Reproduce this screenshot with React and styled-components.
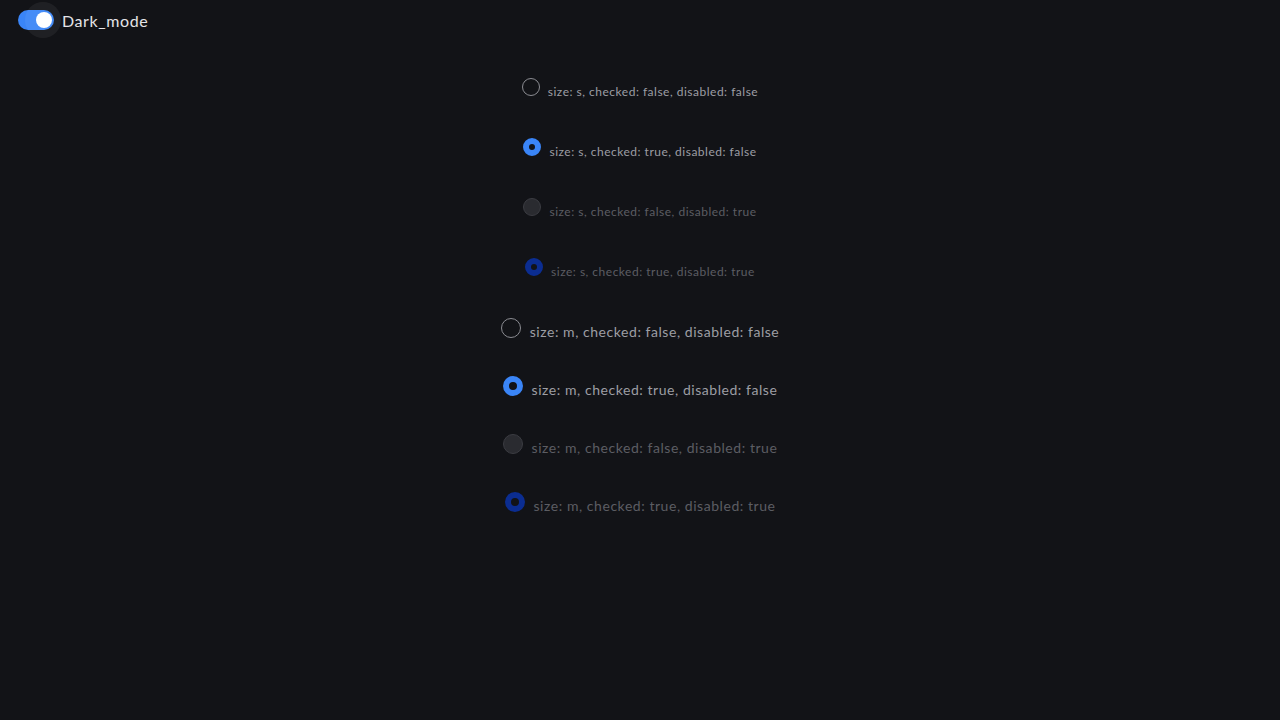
import React from 'react';
import styled, { createGlobalStyle } from 'styled-components';

const GlobalStyle = createGlobalStyle`
  html, body {
    margin: 0;
    padding: 0;
    background: #121317;
    font-family: Lato, "Noto Sans", sans-serif;
  }
  #root {
    min-height: 720px;
  }
`;

const Page = styled.div`
  min-height: 720px;
  background: #121317;
`;

const TopBar = styled.div`
  display: flex;
  align-items: center;
  gap: 8px;
  padding: 10px 0 0 18px;
  height: 20px;
`;

const Toggle = styled.div`
  position: relative;
  width: 36px;
  height: 20px;
  border-radius: 10px;
  background: #3a85f7;
`;

const Halo = styled.div`
  position: absolute;
  left: 7px;
  top: -8px;
  width: 36px;
  height: 36px;
  border-radius: 50%;
  background: rgba(255, 255, 255, 0.06);
`;

const Knob = styled.div`
  position: absolute;
  right: 2px;
  top: 2px;
  width: 16px;
  height: 16px;
  border-radius: 50%;
  background: #ffffff;
`;

const ToggleLabel = styled.span`
  color: #e4e4e7;
  font-size: 16px;
  letter-spacing: 0.6px;
`;

const List = styled.div`
  display: flex;
  flex-direction: column;
  padding-top: 48px;
`;

const Row = styled.div`
  display: flex;
  justify-content: center;
  align-items: flex-start;
  height: ${({ $size }) => ($size === 'm' ? 58 : 60)}px;
  gap: ${({ $size }) => ($size === 'm' ? 9 : 8)}px;
`;

const circleColors = ({ $checked, $disabled }) => {
  if ($checked && $disabled) return 'background: #121317; border-color: #0b2d91;';
  if ($checked) return 'background: #121317; border-color: #3a85f7;';
  if ($disabled) return 'background: #2a2b30; border-color: #3b3c42;';
  return 'background: transparent; border-color: #8b8c92;';
};

const Circle = styled.span`
  box-sizing: border-box;
  flex: none;
  width: ${({ $size }) => ($size === 'm' ? 20 : 18)}px;
  height: ${({ $size }) => ($size === 'm' ? 20 : 18)}px;
  border-radius: 50%;
  border-style: solid;
  border-width: ${({ $checked }) => ($checked ? 6 : 1)}px;
  ${circleColors}
`;

const Label = styled.span`
  font-size: ${({ $size }) => ($size === 'm' ? 14 : 12)}px;
  line-height: ${({ $size }) => ($size === 'm' ? 18 : 16)}px;
  margin-top: ${({ $size }) => ($size === 'm' ? 5 : 6)}px;
  letter-spacing: ${({ $size }) => ($size === 'm' ? 0.55 : 0.5)}px;
  color: ${({ $disabled }) => ($disabled ? '#5c5d63' : '#9d9ea4')};
  white-space: nowrap;
`;

const items = [];
['s', 'm'].forEach((size) => {
  [false, true].forEach((disabled) => {
    [false, true].forEach((checked) => {
      items.push({ size, checked, disabled });
    });
  });
});

const App = () => (
  <Page>
    <GlobalStyle />
    <TopBar>
      <Toggle>
        <Halo />
        <Knob />
      </Toggle>
      <ToggleLabel>Dark_mode</ToggleLabel>
    </TopBar>
    <List>
      {items.map(({ size, checked, disabled }) => (
        <Row key={`${size}-${checked}-${disabled}`} $size={size}>
          <Circle $size={size} $checked={checked} $disabled={disabled} />
          <Label $size={size} $disabled={disabled}>
            size: {size}, checked: {String(checked)}, disabled: {String(disabled)}
          </Label>
        </Row>
      ))}
    </List>
  </Page>
);

export default App;
